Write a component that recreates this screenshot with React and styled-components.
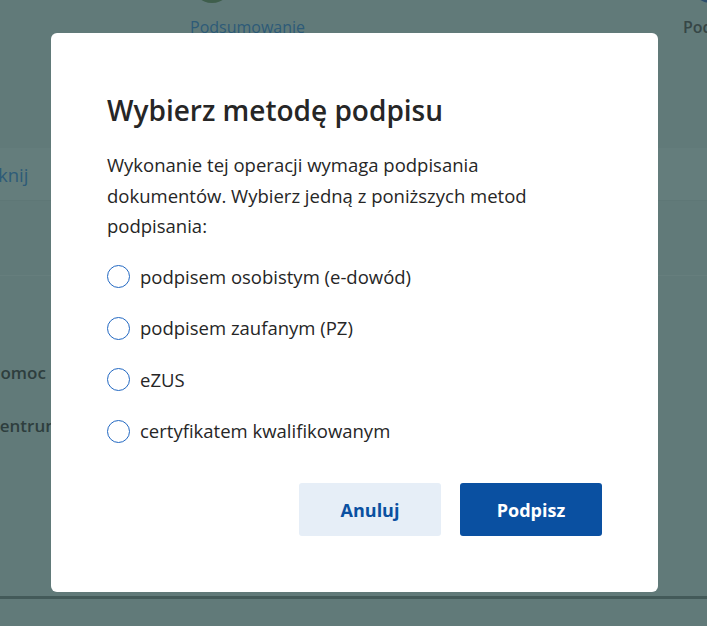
import React from "react";
import styled, { createGlobalStyle } from "styled-components";

const Global = createGlobalStyle`
  html, body { margin: 0; padding: 0; }
  body {
    background: #617a79;
    font-family: "Open Sans", "Noto Sans", sans-serif;
    overflow: hidden;
  }
`;

const Page = styled.div`
  position: relative;
  width: 707px;
  height: 626px;
  overflow: hidden;
  background: #617a79;
`;

const Stepper = styled.div`
  display: flex;
  height: 60px;
  padding-left: 190px;
`;

const Step = styled.div`
  display: flex;
  flex-direction: column;
  align-items: flex-start;
  width: ${(p) => p.$width || "auto"};
  flex: none;
`;

const StepDot = styled.div`
  width: 40px;
  height: 40px;
  border-radius: 50%;
  margin-top: -37px;
  background: ${(p) => p.$color};
  margin-left: ${(p) => p.$shift || 0}px;
`;

const StepLabel = styled.div`
  margin-top: 14px;
  font-size: 16px;
  line-height: 20px;
  color: ${(p) => p.$color};
  font-weight: ${(p) => p.$weight || 400};
  white-space: nowrap;
`;

const SideBand = styled.div`
  margin-top: 88px;
  height: 52px;
  background: #647d7c;
  border-bottom: 1px solid #5e7776;
  display: flex;
  align-items: center;
  overflow: hidden;
`;

const SideLink = styled.span`
  margin-left: -40px;
  font-size: 18.5px;
  color: #2d5b78;
`;

const Divider = styled.div`
  margin-top: 74px;
  height: 1px;
  background: #667e7d;
`;

const SideList = styled.div`
  margin-top: 85px;
  display: flex;
  flex-direction: column;
  gap: 29px;
  overflow: hidden;
`;

const SideItem = styled.div`
  margin-left: ${(p) => p.$offset}px;
  font-size: 17px;
  line-height: 24px;
  font-weight: 600;
  color: #2e3e3e;
  white-space: nowrap;
`;

const BottomRule = styled.div`
  position: absolute;
  left: 0;
  right: 0;
  top: 596px;
  height: 3px;
  background: #435a59;
`;

const Modal = styled.div`
  position: absolute;
  left: 51px;
  top: 33px;
  width: 607px;
  height: 559px;
  box-sizing: border-box;
  background: #ffffff;
  border-radius: 6px;
  padding: 58px 56px 56px 56px;
  display: flex;
  flex-direction: column;
`;

const Title = styled.h2`
  margin: 0;
  font-size: 28px;
  line-height: 38px;
  font-weight: 600;
  color: #262626;
`;

const Lead = styled.p`
  margin: 21px 0 0;
  max-width: 460px;
  font-size: 18.5px;
  line-height: 30.5px;
  color: #262626;
`;

const Options = styled.div`
  margin-top: 23px;
  display: flex;
  flex-direction: column;
  gap: 27.5px;
`;

const Option = styled.label`
  display: flex;
  align-items: center;
  gap: 10px;
  font-size: 18.5px;
  line-height: 24px;
  color: #262626;
  cursor: pointer;
`;

const Radio = styled.span`
  width: 23px;
  height: 23px;
  box-sizing: border-box;
  border-radius: 50%;
  border: 1.8px solid #2268c2;
  flex: none;
`;

const Actions = styled.div`
  margin-top: auto;
  display: flex;
  justify-content: flex-end;
  gap: 19px;
`;

const Button = styled.button`
  width: 142px;
  height: 53px;
  border: none;
  border-radius: 3px;
  font-family: "Open Sans", "Noto Sans", sans-serif;
  font-size: 18px;
  font-weight: 700;
  background: ${(p) => (p.$primary ? "#0a50a1" : "#e6eef7")};
  color: ${(p) => (p.$primary ? "#ffffff" : "#0a50a1")};
  cursor: pointer;
`;

const options = [
  "podpisem osobistym (e-dowód)",
  "podpisem zaufanym (PZ)",
  "eZUS",
  "certyfikatem kwalifikowanym",
];

export default function App() {
  return (
    <Page>
      <Global />
      <Stepper>
        <Step $width="493px">
          <StepDot $color="#3f5e4c" $shift={2} />
          <StepLabel $color="#2d5b78">Podsumowanie</StepLabel>
        </Step>
        <Step>
          <StepDot $color="#2f4f6e" $shift={8} />
          <StepLabel $color="#364646" $weight={600}>Podpisanie</StepLabel>
        </Step>
      </Stepper>
      <SideBand>
        <SideLink>Zamknij</SideLink>
      </SideBand>
      <Divider />
      <SideList>
        <SideItem $offset={-10}>Pomoc</SideItem>
        <SideItem $offset={-11}>Centrum pomocy</SideItem>
      </SideList>
      <BottomRule />
      <Modal role="dialog" aria-modal="true">
        <Title>Wybierz metodę podpisu</Title>
        <Lead>
          Wykonanie tej operacji wymaga podpisania dokumentów. Wybierz jedną z
          poniższych metod podpisania:
        </Lead>
        <Options>
          {options.map((o) => (
            <Option key={o}>
              <Radio />
              {o}
            </Option>
          ))}
        </Options>
        <Actions>
          <Button>Anuluj</Button>
          <Button $primary>Podpisz</Button>
        </Actions>
      </Modal>
    </Page>
  );
}
